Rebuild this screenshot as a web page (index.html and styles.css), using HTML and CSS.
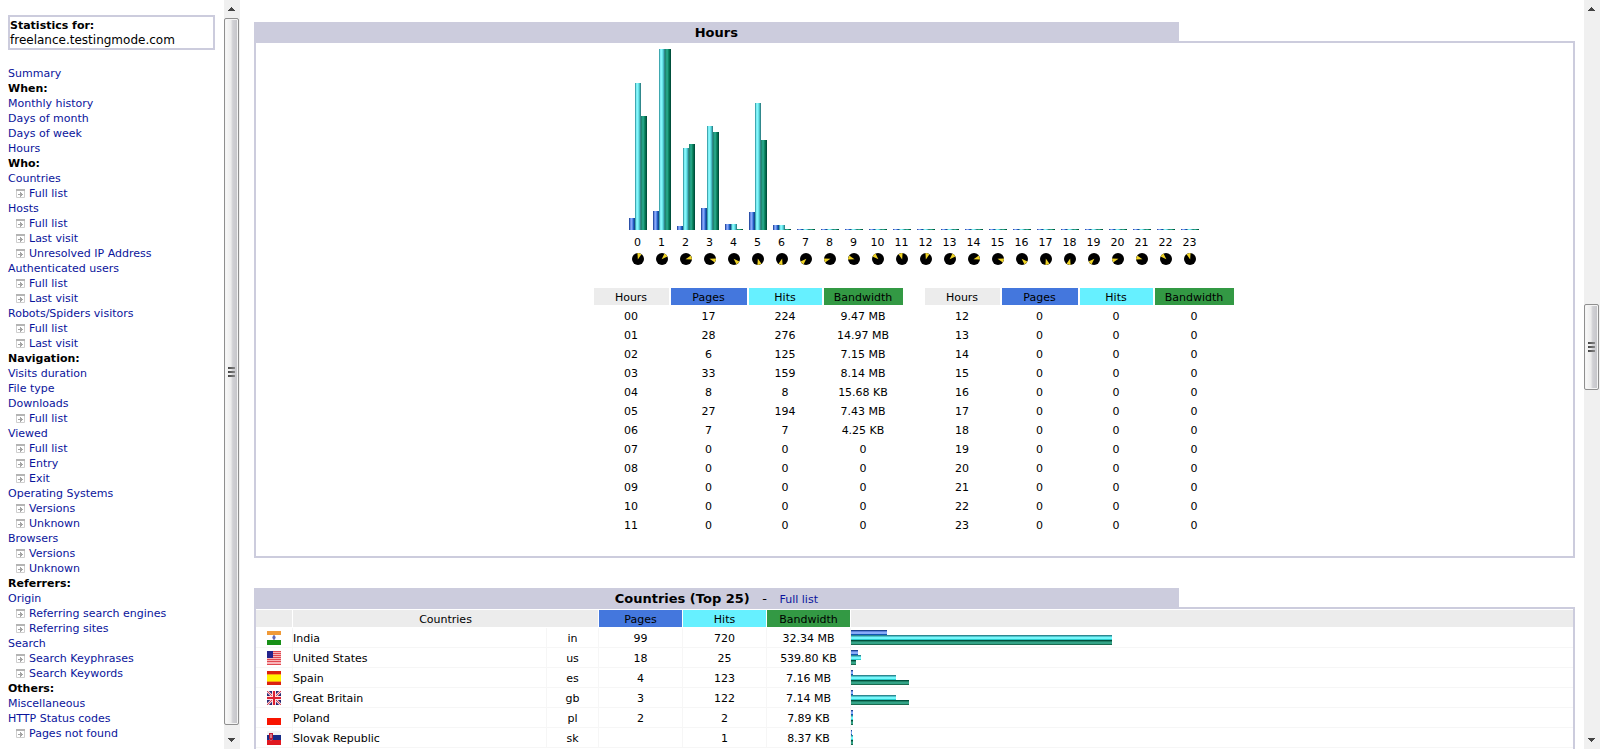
FILE: index.html
```html
<!DOCTYPE html>
<html lang="en">
<head>
<meta charset="utf-8">
<title>Statistics for freelance.testingmode.com</title>
<link rel="stylesheet" href="styles.css">
</head>
<body>
<svg class="defs" aria-hidden="true">
  <symbol id="page" viewBox="0 0 9 9">
    <path fill="#fff" stroke="#cecece" d="M.5.5h8v8h-8z"/>
    <path fill="#b4b4b4" d="M0 0h9v2H0z"/>
    <path fill="#a4a4a4" d="M2 5h2V3h1v1h1v1h1v1H6v1H5v1H4V6H2z"/>
  </symbol>
  <symbol id="clock" viewBox="-6 -6 12 12">
    <circle r="6" fill="#000"/>
  </symbol>
  <symbol id="hand" viewBox="-6 -6 12 12">
    <path fill="#f0d428" d="M0 0.500L-2.100 -5.600A6 6 0 0 1 2.100 -5.600Z"/>
  </symbol>
  <symbol id="up" viewBox="0 0 7 4"><path fill="#444" d="M3 0h1v1h1v1h1v1h1v1H0V3h1V2h1V1h1z"/></symbol>
  <symbol id="down" viewBox="0 0 7 4"><path fill="#444" d="M0 0h7v1H6v1H5v1H4v1H3V3H2V2H1V1H0z"/></symbol>
</svg>
<div class="frames">
<nav class="menu">
  <div class="site"><b>Statistics for:</b><span>freelance.testingmode.com</span></div>
  <ul>
    <li><a href="#">Summary</a></li>
    <li class="head">When:</li>
    <li><a href="#">Monthly history</a></li>
    <li><a href="#">Days of month</a></li>
    <li><a href="#">Days of week</a></li>
    <li><a href="#hours">Hours</a></li>
    <li class="head">Who:</li>
    <li><a href="#countries">Countries</a></li>
    <li class="sub"><svg><use href="#page"/></svg><a href="#">Full list</a></li>
    <li><a href="#">Hosts</a></li>
    <li class="sub"><svg><use href="#page"/></svg><a href="#">Full list</a></li>
    <li class="sub"><svg><use href="#page"/></svg><a href="#">Last visit</a></li>
    <li class="sub"><svg><use href="#page"/></svg><a href="#">Unresolved IP Address</a></li>
    <li><a href="#">Authenticated users</a></li>
    <li class="sub"><svg><use href="#page"/></svg><a href="#">Full list</a></li>
    <li class="sub"><svg><use href="#page"/></svg><a href="#">Last visit</a></li>
    <li><a href="#">Robots/Spiders visitors</a></li>
    <li class="sub"><svg><use href="#page"/></svg><a href="#">Full list</a></li>
    <li class="sub"><svg><use href="#page"/></svg><a href="#">Last visit</a></li>
    <li class="head">Navigation:</li>
    <li><a href="#">Visits duration</a></li>
    <li><a href="#">File type</a></li>
    <li><a href="#">Downloads</a></li>
    <li class="sub"><svg><use href="#page"/></svg><a href="#">Full list</a></li>
    <li><a href="#">Viewed</a></li>
    <li class="sub"><svg><use href="#page"/></svg><a href="#">Full list</a></li>
    <li class="sub"><svg><use href="#page"/></svg><a href="#">Entry</a></li>
    <li class="sub"><svg><use href="#page"/></svg><a href="#">Exit</a></li>
    <li><a href="#">Operating Systems</a></li>
    <li class="sub"><svg><use href="#page"/></svg><a href="#">Versions</a></li>
    <li class="sub"><svg><use href="#page"/></svg><a href="#">Unknown</a></li>
    <li><a href="#">Browsers</a></li>
    <li class="sub"><svg><use href="#page"/></svg><a href="#">Versions</a></li>
    <li class="sub"><svg><use href="#page"/></svg><a href="#">Unknown</a></li>
    <li class="head">Referrers:</li>
    <li><a href="#">Origin</a></li>
    <li class="sub"><svg><use href="#page"/></svg><a href="#">Referring search engines</a></li>
    <li class="sub"><svg><use href="#page"/></svg><a href="#">Referring sites</a></li>
    <li><a href="#">Search</a></li>
    <li class="sub"><svg><use href="#page"/></svg><a href="#">Search Keyphrases</a></li>
    <li class="sub"><svg><use href="#page"/></svg><a href="#">Search Keywords</a></li>
    <li class="head">Others:</li>
    <li><a href="#">Miscellaneous</a></li>
    <li><a href="#">HTTP Status codes</a></li>
    <li class="sub"><svg><use href="#page"/></svg><a href="#">Pages not found</a></li>
  </ul>
</nav>
<div class="scroll">
  <button type="button" aria-label="Scroll menu up"><svg><use href="#up"/></svg></button>
  <div class="thumb"><i></i><i></i><i></i></div>
  <button type="button" aria-label="Scroll menu down"><svg><use href="#down"/></svg></button>
</div>
<main>
  <section id="hours">
    <h2>Hours</h2>
    <div class="box hours">
      <div class="chart">
        <div class="hour"><div class="bars"><i class="p" style="height:12px"></i><i class="h" style="height:147px"></i><i class="b" style="height:114px"></i></div><span>0</span><svg><use href="#clock"/><use href="#hand" transform="rotate(15 6 6)"/></svg></div>
        <div class="hour"><div class="bars"><i class="p" style="height:19px"></i><i class="h" style="height:181px"></i><i class="b" style="height:181px"></i></div><span>1</span><svg><use href="#clock"/><use href="#hand" transform="rotate(45 6 6)"/></svg></div>
        <div class="hour"><div class="bars"><i class="p" style="height:4px"></i><i class="h" style="height:82px"></i><i class="b" style="height:86px"></i></div><span>2</span><svg><use href="#clock"/><use href="#hand" transform="rotate(75 6 6)"/></svg></div>
        <div class="hour"><div class="bars"><i class="p" style="height:22px"></i><i class="h" style="height:104px"></i><i class="b" style="height:98px"></i></div><span>3</span><svg><use href="#clock"/><use href="#hand" transform="rotate(105 6 6)"/></svg></div>
        <div class="hour"><div class="bars"><i class="p" style="height:6px"></i><i class="h" style="height:6px"></i><i class="b"></i></div><span>4</span><svg><use href="#clock"/><use href="#hand" transform="rotate(135 6 6)"/></svg></div>
        <div class="hour"><div class="bars"><i class="p" style="height:18px"></i><i class="h" style="height:127px"></i><i class="b" style="height:90px"></i></div><span>5</span><svg><use href="#clock"/><use href="#hand" transform="rotate(165 6 6)"/></svg></div>
        <div class="hour"><div class="bars"><i class="p" style="height:5px"></i><i class="h" style="height:5px"></i><i class="b"></i></div><span>6</span><svg><use href="#clock"/><use href="#hand" transform="rotate(195 6 6)"/></svg></div>
        <div class="hour"><div class="bars"><i class="p"></i><i class="h"></i><i class="b"></i></div><span>7</span><svg><use href="#clock"/><use href="#hand" transform="rotate(225 6 6)"/></svg></div>
        <div class="hour"><div class="bars"><i class="p"></i><i class="h"></i><i class="b"></i></div><span>8</span><svg><use href="#clock"/><use href="#hand" transform="rotate(255 6 6)"/></svg></div>
        <div class="hour"><div class="bars"><i class="p"></i><i class="h"></i><i class="b"></i></div><span>9</span><svg><use href="#clock"/><use href="#hand" transform="rotate(285 6 6)"/></svg></div>
        <div class="hour"><div class="bars"><i class="p"></i><i class="h"></i><i class="b"></i></div><span>10</span><svg><use href="#clock"/><use href="#hand" transform="rotate(315 6 6)"/></svg></div>
        <div class="hour"><div class="bars"><i class="p"></i><i class="h"></i><i class="b"></i></div><span>11</span><svg><use href="#clock"/><use href="#hand" transform="rotate(345 6 6)"/></svg></div>
        <div class="hour"><div class="bars"><i class="p"></i><i class="h"></i><i class="b"></i></div><span>12</span><svg><use href="#clock"/><use href="#hand" transform="rotate(15 6 6)"/></svg></div>
        <div class="hour"><div class="bars"><i class="p"></i><i class="h"></i><i class="b"></i></div><span>13</span><svg><use href="#clock"/><use href="#hand" transform="rotate(45 6 6)"/></svg></div>
        <div class="hour"><div class="bars"><i class="p"></i><i class="h"></i><i class="b"></i></div><span>14</span><svg><use href="#clock"/><use href="#hand" transform="rotate(75 6 6)"/></svg></div>
        <div class="hour"><div class="bars"><i class="p"></i><i class="h"></i><i class="b"></i></div><span>15</span><svg><use href="#clock"/><use href="#hand" transform="rotate(105 6 6)"/></svg></div>
        <div class="hour"><div class="bars"><i class="p"></i><i class="h"></i><i class="b"></i></div><span>16</span><svg><use href="#clock"/><use href="#hand" transform="rotate(135 6 6)"/></svg></div>
        <div class="hour"><div class="bars"><i class="p"></i><i class="h"></i><i class="b"></i></div><span>17</span><svg><use href="#clock"/><use href="#hand" transform="rotate(165 6 6)"/></svg></div>
        <div class="hour"><div class="bars"><i class="p"></i><i class="h"></i><i class="b"></i></div><span>18</span><svg><use href="#clock"/><use href="#hand" transform="rotate(195 6 6)"/></svg></div>
        <div class="hour"><div class="bars"><i class="p"></i><i class="h"></i><i class="b"></i></div><span>19</span><svg><use href="#clock"/><use href="#hand" transform="rotate(225 6 6)"/></svg></div>
        <div class="hour"><div class="bars"><i class="p"></i><i class="h"></i><i class="b"></i></div><span>20</span><svg><use href="#clock"/><use href="#hand" transform="rotate(255 6 6)"/></svg></div>
        <div class="hour"><div class="bars"><i class="p"></i><i class="h"></i><i class="b"></i></div><span>21</span><svg><use href="#clock"/><use href="#hand" transform="rotate(285 6 6)"/></svg></div>
        <div class="hour"><div class="bars"><i class="p"></i><i class="h"></i><i class="b"></i></div><span>22</span><svg><use href="#clock"/><use href="#hand" transform="rotate(315 6 6)"/></svg></div>
        <div class="hour"><div class="bars"><i class="p"></i><i class="h"></i><i class="b"></i></div><span>23</span><svg><use href="#clock"/><use href="#hand" transform="rotate(345 6 6)"/></svg></div>
      </div>
      <div class="tables">
        <table class="data">
          <tr><th>Hours</th><th class="pages">Pages</th><th class="hits">Hits</th><th class="bw">Bandwidth</th></tr>
          <tr><td>00</td><td>17</td><td>224</td><td>9.47 MB</td></tr>
          <tr><td>01</td><td>28</td><td>276</td><td>14.97 MB</td></tr>
          <tr><td>02</td><td>6</td><td>125</td><td>7.15 MB</td></tr>
          <tr><td>03</td><td>33</td><td>159</td><td>8.14 MB</td></tr>
          <tr><td>04</td><td>8</td><td>8</td><td>15.68 KB</td></tr>
          <tr><td>05</td><td>27</td><td>194</td><td>7.43 MB</td></tr>
          <tr><td>06</td><td>7</td><td>7</td><td>4.25 KB</td></tr>
          <tr><td>07</td><td>0</td><td>0</td><td>0</td></tr>
          <tr><td>08</td><td>0</td><td>0</td><td>0</td></tr>
          <tr><td>09</td><td>0</td><td>0</td><td>0</td></tr>
          <tr><td>10</td><td>0</td><td>0</td><td>0</td></tr>
          <tr><td>11</td><td>0</td><td>0</td><td>0</td></tr>
        </table>
        <table class="data">
          <tr><th>Hours</th><th class="pages">Pages</th><th class="hits">Hits</th><th class="bw">Bandwidth</th></tr>
          <tr><td>12</td><td>0</td><td>0</td><td>0</td></tr>
          <tr><td>13</td><td>0</td><td>0</td><td>0</td></tr>
          <tr><td>14</td><td>0</td><td>0</td><td>0</td></tr>
          <tr><td>15</td><td>0</td><td>0</td><td>0</td></tr>
          <tr><td>16</td><td>0</td><td>0</td><td>0</td></tr>
          <tr><td>17</td><td>0</td><td>0</td><td>0</td></tr>
          <tr><td>18</td><td>0</td><td>0</td><td>0</td></tr>
          <tr><td>19</td><td>0</td><td>0</td><td>0</td></tr>
          <tr><td>20</td><td>0</td><td>0</td><td>0</td></tr>
          <tr><td>21</td><td>0</td><td>0</td><td>0</td></tr>
          <tr><td>22</td><td>0</td><td>0</td><td>0</td></tr>
          <tr><td>23</td><td>0</td><td>0</td><td>0</td></tr>
        </table>
      </div>
    </div>
  </section>
  <section id="countries">
    <h2>Countries (Top 25) <span>-</span> <a href="#">Full list</a></h2>
    <div class="box">
      <table class="countries">
        <colgroup><col class="c-flag"><col class="c-name"><col class="c-code"><col class="c-num"><col class="c-num"><col class="c-num"><col></colgroup>
        <tr><th></th><th colspan="2">Countries</th><th class="pages">Pages</th><th class="hits">Hits</th><th class="bw">Bandwidth</th><th></th></tr>
        <tr>
          <td><svg class="flag" viewBox="0 0 14 14"><path fill="#fff" d="M0 0h14v14H0z"/><path fill="#f09a38" d="M0 0h14v4H0z"/><path fill="#189018" d="M0 9h14v5H0z"/><circle cx="7" cy="6.500" r="1.800" fill="#8088d0"/><path fill="#4048a0" d="M6.500 4h1v5h-1z"/></svg></td>
          <td>India</td><td>in</td><td>99</td><td>720</td><td>32.34 MB</td>
          <td><i class="p" style="width:36px"></i><i class="h" style="width:261px"></i><i class="b" style="width:261px"></i></td>
        </tr>
        <tr>
          <td><svg class="flag" viewBox="0 0 14 14"><path fill="#f8b4b8" d="M0 0h14v14H0z"/><path fill="#e04850" d="M0 0h14v1H0zM0 2h14v1H0zM0 4h14v1H0zM0 6h14v1H0zM0 8h14v1H0zM0 10h14v1H0zM0 13h14v1H0z"/><path fill="#24248c" d="M0 0h6v7H0z"/></svg></td>
          <td>United States</td><td>us</td><td>18</td><td>25</td><td>539.80 KB</td>
          <td><i class="p" style="width:7px"></i><i class="h" style="width:10px"></i><i class="b" style="width:5px"></i></td>
        </tr>
        <tr>
          <td><svg class="flag" viewBox="0 0 14 14"><path fill="#dc2010" d="M0 0h14v14H0z"/><path fill="#f8a010" d="M0 3h14v8H0z"/><path fill="#fff200" d="M0 4h14v6H0z"/></svg></td>
          <td>Spain</td><td>es</td><td>4</td><td>123</td><td>7.16 MB</td>
          <td><i class="p" style="width:2px"></i><i class="h" style="width:45px"></i><i class="b" style="width:58px"></i></td>
        </tr>
        <tr>
          <td><svg class="flag" viewBox="0 0 14 14"><path fill="#282874" d="M0 0h14v14H0z"/><path stroke="#f4d0d8" stroke-width="2.600" d="M0 0l14 14M14 0L0 14"/><path stroke="#d84858" d="M0 0l14 14M14 0L0 14"/><path fill="#fce0e4" d="M5 0h4v14H5zM0 5h14v4H0z"/><path fill="#dc2030" d="M6 0h2v14H6zM0 6h14v2H0z"/></svg></td>
          <td>Great Britain</td><td>gb</td><td>3</td><td>122</td><td>7.14 MB</td>
          <td><i class="p" style="width:2px"></i><i class="h" style="width:45px"></i><i class="b" style="width:58px"></i></td>
        </tr>
        <tr>
          <td><svg class="flag" viewBox="0 0 14 14"><path fill="#fff" d="M0 0h14v7H0z"/><path fill="#f81400" d="M0 7h14v7H0z"/></svg></td>
          <td>Poland</td><td>pl</td><td>2</td><td>2</td><td>7.89 KB</td>
          <td><i class="p" style="width:2px"></i><i class="h" style="width:2px"></i><i class="b" style="width:2px"></i></td>
        </tr>
        <tr>
          <td><svg class="flag" viewBox="0 0 14 14"><path fill="#f4f4f4" d="M0 0h14v5H0z"/><path fill="#182c88" d="M0 4h14v6H0z"/><path fill="#e01820" d="M0 9h14v5H0z"/><path fill="#d87888" d="M2 2h4v6L4 10 2 8z"/><path fill="#c01830" d="M2 2h4v1H2zM2 3h1v5H2zM5 3h1v5H5zM3 7h2v2H3z"/></svg></td>
          <td>Slovak Republic</td><td>sk</td><td></td><td>1</td><td>8.37 KB</td>
          <td><i class="p" style="width:1px"></i><i class="h" style="width:2px"></i><i class="b" style="width:2px"></i></td>
        </tr>
      </table>
    </div>
  </section>
</main>
<div class="scroll page-scroll">
  <button type="button" aria-label="Scroll page up"><svg><use href="#up"/></svg></button>
  <div class="gap-above"></div>
  <div class="thumb"><i></i><i></i><i></i></div>
  <div class="gap-below"></div>
  <button type="button" aria-label="Scroll page down"><svg><use href="#down"/></svg></button>
</div>
</div>
</body>
</html>
```

FILE: styles.css
```css
* { box-sizing: border-box; }
body {
  margin: 0;
  font: 11px/15px Verdana, "DejaVu Sans", sans-serif;
  color: #000;
  background: #fff;
}
.defs { position: absolute; width: 0; height: 0; }
a { color: #0a149b; text-decoration: none; }

.frames {
  display: grid;
  grid-template-columns: 224px 16px 1fr 16px;
  height: 100vh;
  overflow: hidden;
}

/* menu frame */
.menu { padding: 15px 9px 0 8px; overflow: hidden; }
.site {
  display: flex;
  flex-direction: column;
  border: 2px solid #ccccdd;
  margin-bottom: 16px;
  padding-top: 1px;
}
.site span { font-size: 12px; }
.menu ul { list-style: none; margin: 0; padding: 0; }
.menu .head { font-weight: bold; }
.menu .sub { display: flex; align-items: center; gap: 4px; padding-left: 8px; }
.sub svg { width: 9px; height: 9px; }

/* scroll bars */
.scroll {
  display: flex;
  flex-direction: column;
  padding-right: 1px;
  background: #f0f0f0;
}
.scroll button {
  flex: 0 0 18px;
  display: flex;
  align-items: center;
  justify-content: center;
  padding: 0;
  border: 0;
  background: none;
}
.scroll button:last-child { flex-basis: 24px; padding-top: 6px; }
.scroll button svg { width: 7px; height: 4px; }
.thumb {
  flex: 1 1 0;
  display: flex;
  flex-direction: column;
  align-items: center;
  justify-content: center;
  gap: 2px;
  border: 1px solid #8f8f8f;
  border-radius: 2px;
  background: linear-gradient(90deg, #fafafa, #ececec 45%, #d0d0d4 60%, #c4c4c8);
  box-shadow: inset 0 0 0 1px #f4f4f4;
}
.thumb i { width: 7px; height: 2px; background: linear-gradient(90deg, #444, #888); }
.page-scroll .gap-above { flex: 287 1 0; }
.page-scroll .thumb { flex: 84 1 0; }
.page-scroll .gap-below { flex: 336 1 0; }

/* main frame */
main { padding: 22px 9px 0 14px; overflow: hidden; }
section { margin-bottom: 30px; }
h2 {
  width: 70%;
  margin: 0;
  padding-top: 2px;
  background: #ccccdd;
  font-size: 13px;
  line-height: 17px;
  text-align: center;
}
h2 span { margin: 0 8px; font-weight: normal; }
h2 a { font-size: 11px; line-height: 11px; font-weight: normal; }
.box { border: 2px solid #ccccdd; }
.hours { padding: 6px 2px 21px 0; }

.chart { display: flex; justify-content: center; }
.hour { width: 24px; display: flex; flex-direction: column; align-items: center; }
.hour span { margin: 5px 0 3px; }
.hour svg { width: 12px; height: 12px; }
.bars { display: flex; align-items: flex-end; height: 181px; }
.bars i { width: 6px; height: 1px; }
.bars .p { background: linear-gradient(90deg, #2c50a8 1px, #6c8ce4 1px 2px, #86a8f8 2px 3px, #5c88e8 3px 4px, #2060c0 4px 5px, #184890 5px); }
.bars .h { background: linear-gradient(90deg, #40a8b0 1px, #80ecf4 1px 2px, #84f8fc 2px 3px, #68e4e8 3px 4px, #48bcc4 4px 5px, #30888c 5px); }
.bars .b { background: linear-gradient(90deg, #208870 1px, #24a088 1px 2px, #24a484 2px 3px, #108864 3px 4px, #046c50 4px 5px, #00503c 5px); }

.tables { display: flex; justify-content: center; gap: 18px; margin-top: 21px; }
table { table-layout: fixed; }
th { font-weight: normal; background: #ececec; }
th, td { padding: 2px 0 0; text-align: center; }
th.pages { background: #4477dd; }
th.hits { background: #66f0ff; }
th.bw { background: #339944; }
.data { width: 313px; border-spacing: 2px; }
.data th, .data td { height: 17px; }
.data th:nth-child(1) { width: 75px; }
.data th:nth-child(2) { width: 76px; }
.data th:nth-child(3) { width: 73px; }
.data th:nth-child(4) { width: 79px; }

.countries { width: 100%; border-spacing: 0; margin: 1px 0 21px; }
.c-flag { width: 37px; }
.c-name { width: 254px; }
.c-code { width: 52px; }
.c-num { width: 84px; }
.countries th { height: 18px; border: solid #fff; border-width: 0 1px 1px 0; }
.countries td { height: 20px; border: solid #f6f6f6; border-width: 0 1px 1px 0; }
.countries td:first-child { padding-top: 1px; }
.countries td:last-child { padding-top: 0; }
.countries td:nth-child(2), .countries td:last-child { text-align: left; }
.countries tr > :last-child { border-right: 0; }
.flag { display: block; width: 14px; height: 14px; margin: 0 auto; }
.countries i { display: block; height: 5px; }
.countries .p { background: linear-gradient(#1c4490 1px, #6084dc 1px 2px, #88acf8 2px 4px, #1058b4 4px); }
.countries .h { background: linear-gradient(#2c8890 1px, #50c4cc 1px 2px, #74f8fc 2px 4px, #2ccccc 4px); }
.countries .b { background: linear-gradient(#00503c 1px, #208468 1px 2px, #34a488 2px 4px, #1c6c50 4px); }
```
